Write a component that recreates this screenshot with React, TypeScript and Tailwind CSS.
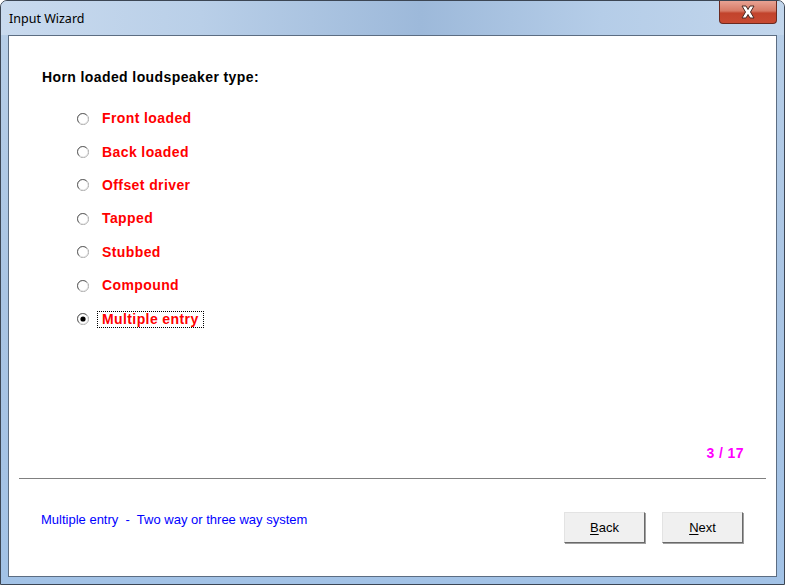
import React from "react";

const options = [
  "Front loaded",
  "Back loaded",
  "Offset driver",
  "Tapped",
  "Stubbed",
  "Compound",
  "Multiple entry",
];

const Radio = ({ checked }: { checked: boolean }) => (
  <svg width="12" height="12" viewBox="0 0 12 12" className="shrink-0">
    <circle cx="6" cy="6" r="5.5" fill="#ffffff" stroke="#9a9a9a" />
    <path d="M2 9.5 A5 5 0 0 1 9.5 2" fill="none" stroke="#6b6b6b" strokeWidth="1" />
    <path d="M10 3 A5 5 0 0 1 3 10" fill="none" stroke="#e3e3e3" strokeWidth="1" />
    {checked && <circle cx="6" cy="6" r="2.6" fill="#000000" />}
  </svg>
);

const WinButton = ({ label }: { label: string }) => (
  <button className="flex h-[31px] w-[81px] items-center justify-center border border-t-[#e3e3e3] border-l-[#e3e3e3] border-r-[#696969] border-b-[#696969] bg-[#f0f0f0] text-[13px] text-black shadow-[1px_1px_0_#a0a0a0]">
    <span className="underline underline-offset-2">{label[0]}</span>
    {label.slice(1)}
  </button>
);

const App = () => {
  const selected = 6;

  return (
    <div className="flex h-[585px] w-[785px] flex-col overflow-hidden rounded-t-[7px] border border-[#3c4654] bg-gradient-to-b from-[#b8cfe8] via-[#a9c4e3] to-[#a2c2e6] font-['Liberation_Sans',Arial,sans-serif]">
      {/* title bar */}
      <div className="flex h-[34px] shrink-0 items-start justify-between bg-[linear-gradient(90deg,#c9daee_0px,#b9cfe8_200px,#9db9da_420px,#b5cde8_600px,#c2d6ec_785px)]">
        <div className="pl-[8px] pt-[9px] font-['Noto_Sans',sans-serif] text-[12.5px] leading-[18px] text-black">
          Input Wizard
        </div>
        <div className="mr-[7px] flex h-[23px] w-[58px] items-center justify-center rounded-b-[4px] border border-t-0 border-[#6b2a20] bg-[linear-gradient(180deg,#e8a293_0%,#d77a66_45%,#c2432c_55%,#c84a32_100%)]">
          <svg width="20" height="14" viewBox="0 0 20 14">
            <path
              d="M4 1 L8 1 L10 4.5 L12 1 L16 1 L12.5 7 L16 13 L12 13 L10 9.5 L8 13 L4 13 L7.5 7 Z"
              fill="#ffffff"
              stroke="#4a2a24"
              strokeWidth="1"
            />
          </svg>
        </div>
      </div>

      {/* client area */}
      <div className="mx-[7px] flex h-[542px] flex-col border border-[#5c6d82] bg-white">
        <div className="pl-[33px] pt-[33px] text-[14px] font-bold leading-[16px] tracking-[0.4px] text-black">
          Horn loaded loudspeaker type:
        </div>

        <div className="mt-[17px] flex flex-col pl-[68px]">
          {options.map((option, index) => (
            <div key={option} className="flex h-[33.4px] items-center gap-[8px]">
              <Radio checked={index === selected} />
              <span
                className={`border px-[4px] text-[14px] font-bold leading-[15px] tracking-[0.4px] text-[#ff0000] ${
                  index === selected ? "border-dotted border-black" : "border-transparent"
                }`}
              >
                {option}
              </span>
            </div>
          ))}
        </div>

        <div className="flex-1" />

        <div className="flex justify-end pr-[32px] text-[14px] font-bold leading-[16px] tracking-[0.4px] text-[#ff00ff]">
          3 / 17
        </div>

        <div className="mx-[10px] mt-[17px] h-px bg-[#808080]" />

        <div className="flex items-start justify-between pb-[33px] pl-[32px] pr-[33px] pt-[33px]">
          <div className="text-[13px] leading-[16px] text-[#0000ff]">
            Multiple entry&nbsp; -&nbsp; Two way or three way system
          </div>
          <div className="flex gap-[17px]">
            <WinButton label="Back" />
            <WinButton label="Next" />
          </div>
        </div>
      </div>
      <div className="flex-1" />
    </div>
  );
};

export default App;
